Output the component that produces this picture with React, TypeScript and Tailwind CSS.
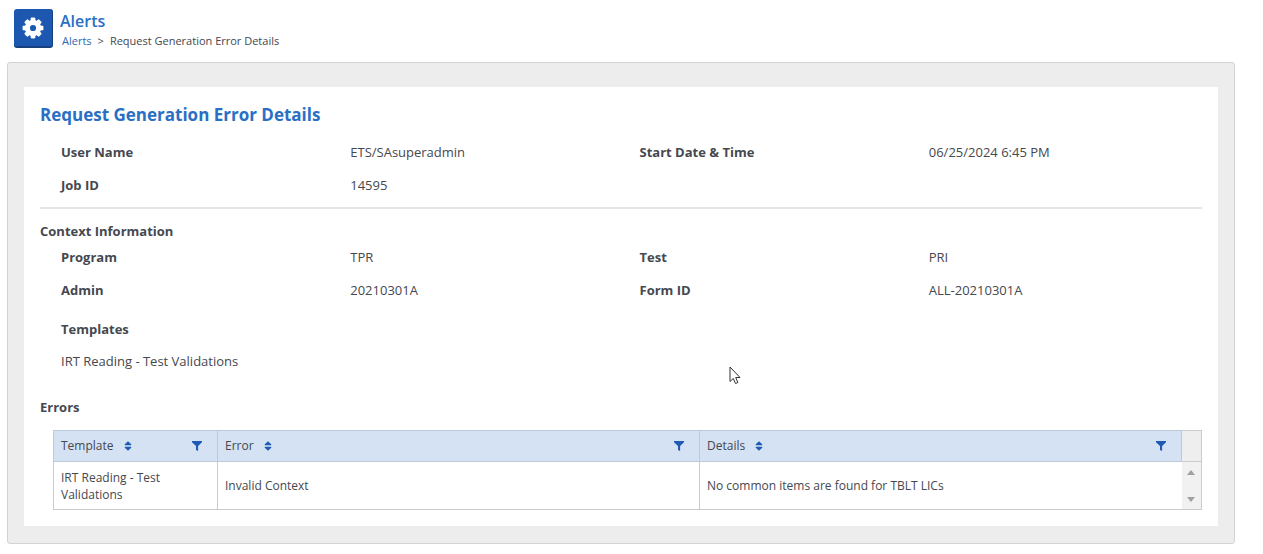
interface Field {
    label: string;
    value: string;
}

const jobFields: Field[] = [
    { label: "User Name", value: "ETS/SAsuperadmin" },
    { label: "Start Date & Time", value: "06/25/2024 6:45 PM" },
    { label: "Job ID", value: "14595" },
];

const contextFields: Field[] = [
    { label: "Program", value: "TPR" },
    { label: "Test", value: "PRI" },
    { label: "Admin", value: "20210301A" },
    { label: "Form ID", value: "ALL-20210301A" },
];

const columns = ["Template", "Error", "Details"];

const errors = [
    {
        template: "IRT Reading - Test Validations",
        error: "Invalid Context",
        details: "No common items are found for TBLT LICs",
    },
];

const toothAngles = [0, 45, 90, 135, 180, 225, 270, 315];

const GearIcon = () => (
    <svg viewBox="0 0 24 24" className="size-6" aria-hidden="true">
        {toothAngles.map((angle) => (
            <path key={angle} d="M9.4 5.5 9.7 2.4Q9.8 1.6 10.6 1.6H13.4Q14.2 1.6 14.3 2.4L14.6 5.5Z" fill="#fff" transform={`rotate(${angle} 12 12)`} />
        ))}
        <circle cx="12" cy="12" r="5.6" fill="none" stroke="#fff" strokeWidth="5" />
    </svg>
);

const SortIcon = () => (
    <svg viewBox="0 0 8 10" className="h-2.5 w-2" fill="#1f5bb5" aria-hidden="true">
        <path d="M4 .3 7.2 3.3Q7.6 4.2 6.8 4.2H1.2Q.4 4.2.8 3.3Z" />
        <path d="M4 9.7.8 6.7Q.4 5.8 1.2 5.8H6.8Q7.6 5.8 7.2 6.7Z" />
    </svg>
);

const FilterIcon = () => (
    <svg viewBox="0 0 10 10" className="size-2.5" fill="#1f5bb5" aria-hidden="true">
        <path d="M0 0H10V1.3L6.1 5V10L4 9V5L0 1.3Z" />
    </svg>
);

const FieldGrid = ({ fields }: { fields: Field[] }) => (
    <dl className="ml-[5px] grid grid-cols-2">
        {fields.map((field) => (
            <div key={field.label} className="grid grid-cols-2 leading-[33px]">
                <dt className="pl-4 font-bold">{field.label}</dt>
                <dd className="pl-4">{field.value}</dd>
            </div>
        ))}
    </dl>
);

const PageHeader = () => (
    <header className="flex items-start pt-[9px] pl-3.5">
        <div className="flex size-[39px] items-center justify-center rounded-[3px] border-r border-b-2 border-[#17407f] bg-[#1c57b0]">
            <GearIcon />
        </div>
        <div className="pl-[7px]">
            <h1 className="text-base leading-6 font-semibold text-[#2a6fc4]">Alerts</h1>
            <nav aria-label="Breadcrumb" className="flex gap-1.5 pl-0.5 text-[11px] leading-4">
                <a href="#alerts" className="text-[#2f68b5]">Alerts</a>
                <span>&gt;</span>
                <span>Request Generation Error Details</span>
            </nav>
        </div>
    </header>
);

const ErrorsTable = () => (
    <table className="mt-[13px] w-full table-fixed border-collapse border border-[#c8cccf] text-left text-xs">
        <thead>
            <tr className="h-[31px] bg-[#d4e2f3]">
                {columns.map((column) => (
                    <th key={column} className="border border-[#bccadb] px-[7px] font-normal first:w-[164px]">
                        <div className="flex items-center">
                            <span>{column}</span>
                            <button type="button" aria-label={`Sort by ${column}`} className="ml-2.5">
                                <SortIcon />
                            </button>
                            <button type="button" aria-label={`Filter ${column}`} className="mr-2 ml-auto">
                                <FilterIcon />
                            </button>
                        </div>
                    </th>
                ))}
                <td className="w-5 border border-[#c8cccf] bg-[#eeeeee]" />
            </tr>
        </thead>
        <tbody>
            {errors.map((row) => (
                <tr key={row.template} className="h-12 leading-[17px]">
                    <td className="border border-[#c8cccf] pr-10 pl-[7px]">{row.template}</td>
                    <td className="border border-[#c8cccf] px-[7px]">{row.error}</td>
                    <td className="px-[7px]">{row.details}</td>
                    <td className="bg-[#f1f1f1]">
                        <div className="flex flex-col items-center gap-[22px]">
                            <button type="button" aria-label="Scroll up">
                                <svg viewBox="0 0 8 5" className="h-[5px] w-2" fill="#a0a0a0"><path d="M4 0 8 5H0Z" /></svg>
                            </button>
                            <button type="button" aria-label="Scroll down">
                                <svg viewBox="0 0 8 5" className="h-[5px] w-2" fill="#a0a0a0"><path d="M0 0H8L4 5Z" /></svg>
                            </button>
                        </div>
                    </td>
                </tr>
            ))}
        </tbody>
    </table>
);

const App = () => {
    return (
        <div className="relative bg-white font-['Open_Sans',sans-serif] text-[13px] text-[#45484f]">
            <PageHeader />

            <main className="mt-[13px] mr-7 ml-[7px] rounded-[3px] border border-[#d2d2d2] bg-[#ededed] px-4 pt-6 pb-[17px]">
                <section className="bg-white p-4">
                    <h2 className="mb-[9px] text-[17px] leading-6 font-bold text-[#2a6fc4]">
                        Request Generation Error Details
                    </h2>
                    <FieldGrid fields={jobFields} />

                    <hr className="mt-[5px] border-t-2 border-[#e5e5e5]" />

                    <h3 className="mt-3 leading-5 font-bold">Context Information</h3>
                    <FieldGrid fields={contextFields} />

                    <div className="mt-1.5 pl-[21px] leading-8">
                        <h4 className="font-bold">Templates</h4>
                        <p>IRT Reading - Test Validations</p>
                    </div>

                    <h3 className="mt-5 leading-5 font-bold">Errors</h3>
                    <div className="pl-[13px]">
                        <ErrorsTable />
                    </div>
                </section>
            </main>

            {/* Mouse pointer */}
            <svg viewBox="0 0 12 19" className="absolute top-[366px] left-[729px] h-[19px] w-3" aria-hidden="true">
                <path d="M1 1V15.5L4.3 12.4 6.5 17.5 8.9 16.5 6.7 11.5H11Z" fill="#fff" stroke="#333" strokeWidth="1" />
            </svg>
        </div>
    );
};

export default App;
